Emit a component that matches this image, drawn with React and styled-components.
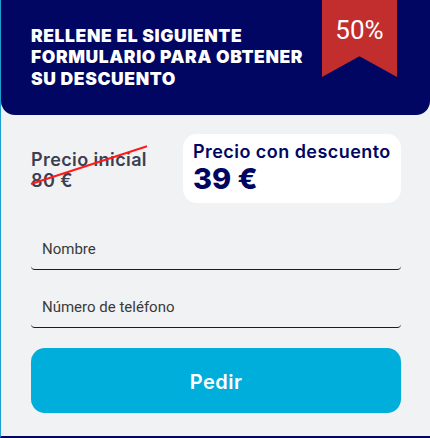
import React from 'react';
import styled, { createGlobalStyle } from 'styled-components';

const Global = createGlobalStyle`
  html, body { margin: 0; padding: 0; background: #f1f2f4; }
  body { font-family: 'Inter', 'Liberation Sans', sans-serif; }
  * { box-sizing: border-box; }
`;

const Page = styled.div`
  width: 430px;
  height: 438px;
  background: #f1f2f4;
  border-left: 1px solid #1d9fd4;
  border-bottom: 2px solid #000661;
  display: flex;
  flex-direction: column;
  overflow: hidden;
`;

const Header = styled.header`
  position: relative;
  height: 115px;
  background: #000661;
  border-radius: 0 0 14px 14px;
  padding: 25px 0 0 30px;
`;

const Heading = styled.h1`
  margin: 0;
  font-family: 'Inter', sans-serif;
  font-weight: 900;
  font-size: 17.5px;
  line-height: 21.3px;
  letter-spacing: 0.6px;
  color: #fff;
  text-transform: uppercase;
`;

const Ribbon = styled.div`
  position: absolute;
  top: 0;
  right: 33px;
  width: 75px;
  height: 77px;
  background: #c22e2e;
  clip-path: polygon(0 0, 100% 0, 100% 100%, 50% 73%, 0 100%);
  display: flex;
  justify-content: center;
  padding-top: 15px;
  color: #fff;
  font-family: 'Roboto', sans-serif;
  font-size: 26px;
  line-height: 30px;
`;

const Body = styled.div`
  padding: 19px 29px 0 30px;
  display: flex;
  flex-direction: column;
`;

const PriceRow = styled.div`
  display: flex;
  align-items: center;
  justify-content: space-between;
`;

const OldPrice = styled.div`
  position: relative;
  font-size: 18px;
  font-weight: 600;
  letter-spacing: 0.4px;
  line-height: 21px;
  color: #3b3f51;
  padding-top: 3px;
  &::after {
    content: '';
    position: absolute;
    left: 0;
    top: 37px;
    width: 122px;
    height: 2px;
    background: #ff1a1a;
    transform-origin: 0 50%;
    transform: rotate(-18deg);
  }
`;

const PriceCard = styled.div`
  width: 218px;
  height: 69px;
  background: #fff;
  border-radius: 14px;
  padding: 7px 10px 0;
  color: #000661;
`;

const CardLabel = styled.div`
  font-size: 18px;
  font-weight: 600;
  letter-spacing: 0.45px;
  line-height: 22px;
`;

const CardPrice = styled.div`
  font-size: 29px;
  font-weight: 800;
  line-height: 32px;
`;

const Field = styled.input`
  display: block;
  width: 100%;
  margin-top: ${(p) => p.$gap}px;
  height: 38px;
  padding: 0 11px 4px;
  border: none;
  border-bottom: 1px solid #1c1c24;
  border-radius: 0 0 4px 4px;
  background: transparent;
  font-family: 'Roboto', sans-serif;
  font-size: 15px;
  color: #333;
  outline: none;
  &::placeholder { color: #3a3a3a; }
`;

const Submit = styled.button`
  margin-top: 20px;
  height: 65px;
  width: 100%;
  border: none;
  border-radius: 14px;
  background: #00aedb;
  color: #fff;
  font-family: 'Inter', sans-serif;
  font-weight: 600;
  font-size: 20px;
  letter-spacing: 0.5px;
  padding-top: 3px;
  cursor: pointer;
`;

const App = () => (
  <Page>
    <Global />
    <Header>
      <Heading>
        Rellene el siguiente
        <br />
        formulario para obtener
        <br />
        su descuento
      </Heading>
      <Ribbon>50%</Ribbon>
    </Header>
    <Body>
      <PriceRow>
        <OldPrice>
          Precio inicial
          <br />
          80 €
        </OldPrice>
        <PriceCard>
          <CardLabel>Precio con descuento</CardLabel>
          <CardPrice>39 €</CardPrice>
        </PriceCard>
      </PriceRow>
      <Field $gap={29} placeholder="Nombre" />
      <Field $gap={20} placeholder="Número de teléfono" />
      <Submit>Pedir</Submit>
    </Body>
  </Page>
);

export default App;
